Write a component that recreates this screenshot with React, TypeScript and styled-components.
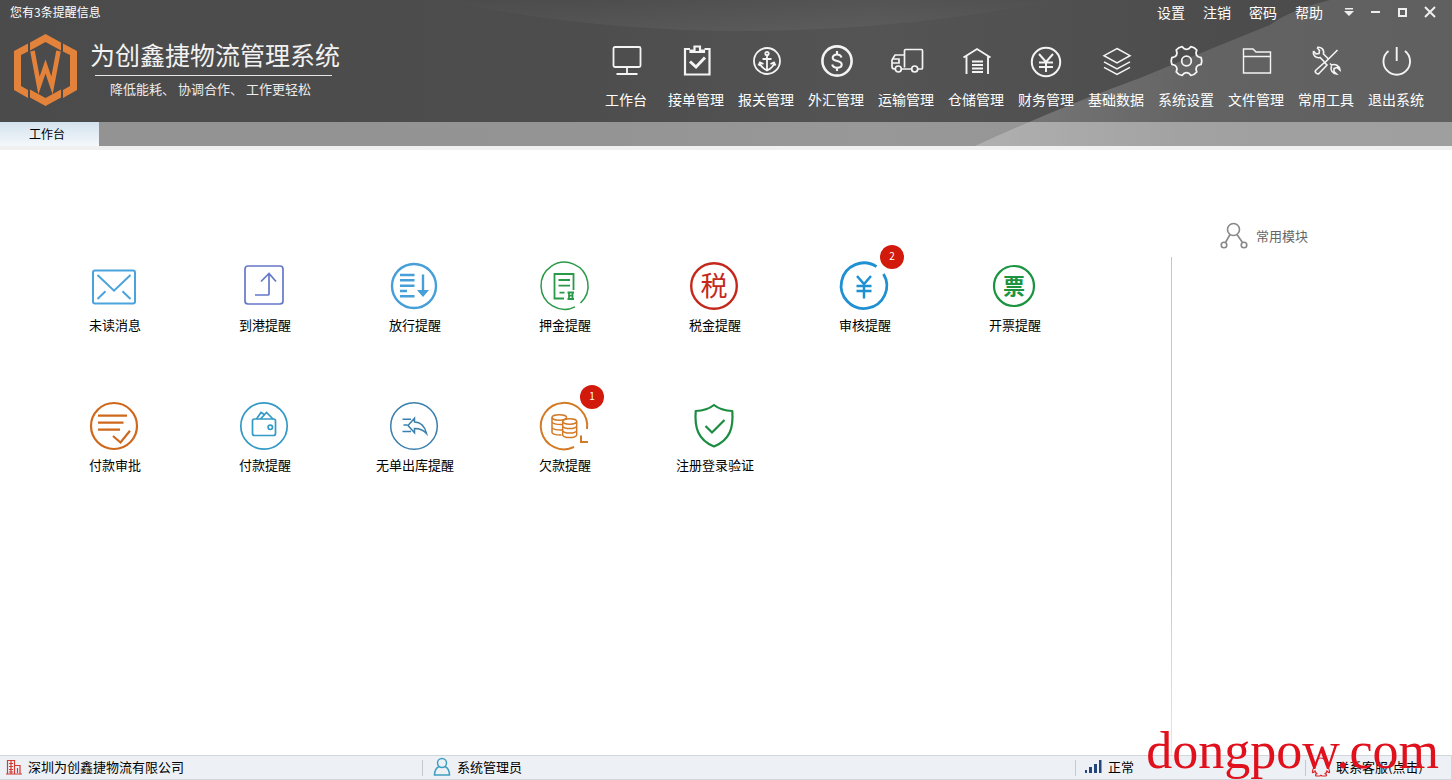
import React from "react";
import styled, { createGlobalStyle } from "styled-components";

const GlobalStyle = createGlobalStyle`
  * { box-sizing: border-box; }
  body {
    margin: 0;
    background: #fff;
    color: #000;
    font-family: "Noto Sans CJK SC", "Liberation Sans", sans-serif;
    font-size: 13px;
    line-height: 20px;
  }
  button {
    margin: 0;
    padding: 0;
    border: 0;
    background: none;
    color: inherit;
    font: inherit;
    cursor: pointer;
  }
  svg { display: block; flex: none; }
`;

const Page = styled.div`
  position: relative;
  display: flex;
  flex-direction: column;
  min-height: 100vh;
`;

const Header = styled.header`
  position: relative;
  isolation: isolate;
  background: linear-gradient(90deg, #4b4b4b, #4d4d4d 40%, #545454 60%, #4c4c4c 85%);
  color: #fff;
`;

const Backdrop = styled.svg`
  position: absolute;
  inset: 0;
  z-index: -1;
  width: 100%;
  height: 100%;
`;

const TitleBar = styled.div`
  display: flex;
  align-items: center;
  height: 24px;
  padding: 0 9px 0 10px;
`;

const Notice = styled.span`
  flex: 1;
  font-size: 12px;
`;

const Menu = styled.nav`
  display: flex;
  gap: 18px;
  margin-right: 12px;
  font-size: 14px;
`;

const WindowButton = styled.button`
  display: flex;
  align-items: center;
  justify-content: center;
  width: 27px;
  height: 24px;
`;

const Banner = styled.div`
  display: flex;
  justify-content: space-between;
  height: 98px;
  padding: 0 21px 0 12px;
`;

const Brand = styled.div`
  display: flex;
  gap: 12px;
  padding-top: 8px;
`;

const BrandText = styled.div`
  display: flex;
  flex-direction: column;
  align-items: flex-start;
`;

const SystemName = styled.h1`
  margin: 4px 0 3px;
  font-size: 25px;
  font-weight: 400;
  line-height: 36px;
  white-space: nowrap;
  color: #f2f2f2;
`;

const Slogan = styled.p`
  display: flex;
  gap: 3px;
  margin: 0 0 0 5px;
  padding: 3px 21px 0 15px;
  border-top: 1px solid #e6e6e6;
  color: #ececec;
  white-space: nowrap;
`;

const Toolbar = styled.nav`
  display: flex;
`;

const Tool = styled.button`
  display: flex;
  flex-direction: column;
  align-items: center;
  width: 70px;
  padding-top: 19px;
  gap: 10px;
  font-size: 14px;
  white-space: nowrap;
`;

const TabStrip = styled.div`
  display: flex;
  height: 24px;
  background: rgba(255, 255, 255, 0.4);
`;

const Tab = styled.button`
  width: 99px;
  padding-right: 5px;
  background: linear-gradient(#d3e2ee, #f4f8fb);
  color: #000;
  font-size: 12px;
`;

const Main = styled.main`
  display: flex;
  flex: 1;
  border-top: 4px solid #f0f0f0;
`;

const Tiles = styled.section`
  display: grid;
  flex: 1;
  grid-template-columns: repeat(auto-fill, 150px);
  grid-auto-rows: 140px;
  align-content: start;
  padding: 108px 0 0 40px;
`;

const Tile = styled.button`
  position: relative;
  display: flex;
  flex-direction: column;
  align-items: center;
  justify-content: flex-start;
  gap: 1px;
`;

const Badge = styled.span`
  position: absolute;
  top: -13px;
  left: 90px;
  width: 24px;
  height: 24px;
  border-radius: 50%;
  background: #d11a0c;
  color: #fff;
  font-size: 10px;
  line-height: 22px;
  text-align: center;
`;

const Side = styled.aside`
  display: flex;
  flex-direction: column;
  width: 281px;
`;

const SideTitle = styled.h2`
  display: flex;
  align-items: center;
  gap: 7px;
  margin: 0;
  padding: 71px 0 6px 48px;
  color: #666;
  font-size: 13px;
  font-weight: 400;
`;

const SideBody = styled.div`
  flex: 1;
  border-left: 1px solid;
  border-image: linear-gradient(#c6c6c6 60%, #e6e6e6) 1;
`;

const StatusBar = styled.footer`
  display: grid;
  grid-template-columns: 422px 1fr 230px 146px;
  height: 25px;
  border: 1px solid #d0d7db;
  border-left: 0;
  background: #edf1f6;
`;

const StatusItem = styled.div<{ $inset: number }>`
  display: flex;
  align-items: center;
  gap: 6px;
  padding: 0 0 2px ${(p) => p.$inset}px;
  white-space: nowrap;

  & + & {
    background: linear-gradient(#c3c9ce, #c3c9ce) left center / 1px 16px no-repeat;
  }
`;

const StatusLink = styled.a`
  display: flex;
  align-items: center;
  gap: 5px;
  color: #000;
  text-decoration: none;
`;

const Watermark = styled.div`
  position: absolute;
  right: 13px;
  bottom: 0;
  color: #e0101c;
  font-family: "Liberation Serif", serif;
  font-size: 52px;
  line-height: 58px;
  pointer-events: none;
`;

const ToolIcon = ({ width = 2, children }: { width?: number; children: React.ReactNode }) => (
  <svg width="36" height="36" viewBox="0 0 36 36" fill="none" stroke="#f4f4f4" strokeWidth={width} aria-hidden="true">
    {children}
  </svg>
);

const TileIcon = ({ color, width = 2, children }: { color: string; width?: number; children: React.ReactNode }) => (
  <svg width="56" height="56" viewBox="1 0 56 56" fill="none" stroke={color} strokeWidth={width} aria-hidden="true">
    {children}
  </svg>
);

const gearOutline = () => {
  const at = (r: number, deg: number) => {
    const a = (deg * Math.PI) / 180;
    return `${(18.5 + r * Math.cos(a)).toFixed(2)} ${(18 + r * Math.sin(a)).toFixed(2)}`;
  };
  let d = "";
  for (let k = 0; k < 6; k++) {
    const c = k * 60;
    d += `${k ? "L" : "M"}${at(12.4, c - 20)}L${at(15, c - 13)}Q${at(16, c)} ${at(15, c + 13)}L${at(12.4, c + 20)}Q${at(11, c + 30)} ${at(12.4, c + 40)}`;
  }
  return d + "Z";
};

const tools: { label: string; icon: React.ReactNode }[] = [
  {
    label: "工作台",
    icon: (
      <ToolIcon width={1.8}>
        <rect x="5.5" y="4" width="27" height="20" rx="1.5" />
        <path d="M19 24v7M8.500 31h21" />
      </ToolIcon>
    ),
  },
  {
    label: "接单管理",
    icon: (
      <ToolIcon width={2.2}>
        <path d="M12 6H7v25.500h24.500V6h-5" />
        <path d="M11.500 9h15M12.500 10V7.500h4V3.500h5.500v4h4V10" />
        <path d="M12 18.500l6 5.500 9-9.500" strokeWidth="3" />
      </ToolIcon>
    ),
  },
  {
    label: "报关管理",
    icon: (
      <ToolIcon width={1.8}>
        <circle cx="19" cy="18" r="13" />
        <circle cx="19" cy="10.500" r="1.700" />
        <path d="M19 12v15.500M14.500 16h9M12 20.500c1 4 4 5.500 7 7 3-1.500 6-3 7-7M10.500 22.500l1.500-3 3.500 1.500M27.500 22.500l-1.500-3-3.500 1.500" />
      </ToolIcon>
    ),
  },
  {
    label: "外汇管理",
    icon: (
      <ToolIcon width={2.6}>
        <circle cx="19" cy="18" r="14.600" />
        <path d="M23.500 14.500c-.5-2-2.300-3-4.500-3-2.500 0-4.300 1.300-4.300 3.200 0 4.600 9 2 9 6.700 0 2-2 3.300-4.700 3.300-2.500 0-4.300-1.200-4.800-3.200M19 8v3.500M19 24.500V28" strokeWidth="2.100" />
      </ToolIcon>
    ),
  },
  {
    label: "运输管理",
    icon: (
      <ToolIcon width={1.7}>
        <path d="M16.500 24.500V7.500q0-1 1-1h16q1 0 1 1v17.500q0 1-1 1H30M23.500 26h-10M7 26q-3 0-3-2v-7l3-5h9.500M5.500 16h5.500v4H4.500" />
        <circle cx="10.300" cy="26" r="3" />
        <circle cx="26.700" cy="26" r="3" />
      </ToolIcon>
    ),
  },
  {
    label: "仓储管理",
    icon: (
      <ToolIcon width={1.9}>
        <path d="M5.500 14.500L19 6l13.500 8.500M8.500 13v18M30 13v18M14 18.500h11M14 22h11M14 25.500h11M14 29h11" />
      </ToolIcon>
    ),
  },
  {
    label: "财务管理",
    icon: (
      <ToolIcon>
        <circle cx="18" cy="19" r="14.200" />
        <path d="M11 11l7 8 7-8M18 19v10M11 19.500h14M11 24h14" />
      </ToolIcon>
    ),
  },
  {
    label: "基础数据",
    icon: (
      <ToolIcon width={1.5}>
        <path d="M19 5.500l13 7.200-13 7.200-13-7.200zM6 18.800L19 26l13-7.200M6 24.300l13 7.200 13-7.200" />
      </ToolIcon>
    ),
  },
  {
    label: "系统设置",
    icon: (
      <ToolIcon width={1.8}>
        <path d={gearOutline()} strokeLinejoin="round" />
        <circle cx="18.500" cy="18" r="4.800" />
      </ToolIcon>
    ),
  },
  {
    label: "文件管理",
    icon: (
      <ToolIcon width={1.4}>
        <path d="M5.500 6h9.500l3 3h14.500v21h-27zM5.500 13.500h27" />
      </ToolIcon>
    ),
  },
  {
    label: "常用工具",
    icon: (
      <ToolIcon width={1.6}>
        <path d="M9 4.500c4-1 7.500 2 6.500 6.500l5 5M5.500 8c-1 4 2 7.500 6.500 6.500l4.500 4.500M9 4.500l2.500 3-.5 3-3 .5L5.500 8" />
        <path d="M22 20.500l1.500 1.500c3.500-1.500 8 .5 8.500 5l-3-2.500-3 1v3l2.500 2.500c-4-.5-6.500-4-5-8" />
        <path d="M29.500 7L17 19.500M16.500 19.500l2.500 2.500-8 8.500q-1.500 1-3-.5t0-3z" />
      </ToolIcon>
    ),
  },
  {
    label: "退出系统",
    icon: (
      <ToolIcon width={1.9}>
        <path d="M10.500 8a13.300 13.300 0 1 0 16.500 0M18.700 4v14" />
      </ToolIcon>
    ),
  },
];

const tiles: { label: string; count?: number; icon: React.ReactNode }[] = [
  {
    label: "未读消息",
    icon: (
      <TileIcon color="#4ba3dc">
        <rect x="7" y="12.500" width="42" height="33" rx="2" />
        <path d="M11.500 17L28 32.700 44.500 17M11.500 41l8-7.700M44.500 41l-8-7.700" />
      </TileIcon>
    ),
  },
  {
    label: "到港提醒",
    icon: (
      <TileIcon color="#6478c8" width={1.7}>
        <rect x="9" y="8" width="38" height="38" rx="3" />
        <path d="M19 37h13q1 0 1-1V15.500M25 23.500l8-8 7 8" />
      </TileIcon>
    ),
  },
  {
    label: "放行提醒",
    icon: (
      <TileIcon color="#469fd8" width={2.4}>
        <circle cx="28" cy="28" r="22" />
        <path d="M14 17h14.500M14 22.300h14.500M14 27.700h14.500M14 33h7M14 38.300h14.500" />
        <path d="M37 16.500V34" />
        <path d="M31 32h12l-6 7z" fill="#469fd8" stroke="none" />
      </TileIcon>
    ),
  },
  {
    label: "押金提醒",
    icon: (
      <TileIcon color="#2a9a48" width={1.5}>
        <path d="M44.500 45A23.500 23.500 0 1 0 39 48.800" />
        <path d="M37.500 32V16h-19v24.500H28M22.500 22h11.500M22.500 27.700h11.500M23.500 34.700h5M31.500 34.500h6.500M31.500 41h6.500M33 34.500v6.500M36.500 34.500v6.500M33 37.700h3.500" strokeWidth="1.800" />
      </TileIcon>
    ),
  },
  {
    label: "税金提醒",
    icon: (
      <TileIcon color="#c4281c" width={2.4}>
        <circle cx="28" cy="28" r="22.800" />
        <text x="28" y="38" fontSize="27" textAnchor="middle" fill="#c4281c" stroke="none">税</text>
      </TileIcon>
    ),
  },
  {
    label: "审核提醒",
    count: 2,
    icon: (
      <TileIcon color="#1f90d2" width={2.8}>
        <path d="M40.500 8.700A22.800 22.800 0 1 0 47.500 16" />
        <path d="M21 18l7 8 7-8M28 26v14.500M20.500 28h15M20.500 33h15" strokeWidth="2.500" />
      </TileIcon>
    ),
  },
  {
    label: "开票提醒",
    icon: (
      <TileIcon color="#1a9440" width={2.2}>
        <circle cx="28" cy="28" r="20" />
        <text x="28" y="36" fontSize="22" fontWeight="700" textAnchor="middle" fill="#1a9440" stroke="none">票</text>
      </TileIcon>
    ),
  },
  {
    label: "付款审批",
    icon: (
      <TileIcon color="#d0681c" width={2.2}>
        <circle cx="28" cy="28" r="23" />
        <path d="M12 17.700h29M12 24.700h25.500M12 31.700h22M27 38l7.500 6.500L44 32.700" />
      </TileIcon>
    ),
  },
  {
    label: "付款提醒",
    icon: (
      <TileIcon color="#3399c6" width={1.7}>
        <circle cx="28" cy="28" r="23.200" />
        <rect x="16.500" y="21" width="23" height="16.500" rx="2" />
        <circle cx="34.300" cy="29.300" r="2.200" />
        <path d="M20.500 21l4.500-6.500 3 1.800M24.500 21l6-6.500L37 21" />
      </TileIcon>
    ),
  },
  {
    label: "无单出库提醒",
    icon: (
      <TileIcon color="#3a7fae" width={1.5}>
        <circle cx="28" cy="28" r="23.300" />
        <path d="M16.500 21.300H25M17.500 27h4M16.500 33.500H25M22 27.500l6.500-7.200V24c6 0 10.500 4.500 12 11.500-3.500-4-7-5-12-5v4.300z" />
      </TileIcon>
    ),
  },
  {
    label: "欠款提醒",
    count: 1,
    icon: (
      <TileIcon color="#d27a26" width={2}>
        <path d="M38 49A23.200 23.200 0 1 1 51 31M45 37.500V44h7" />
        <g strokeWidth="1.500">
          <ellipse cx="23.300" cy="19.500" rx="7.300" ry="2.700" />
          <ellipse cx="33.700" cy="23.500" rx="7" ry="2.700" />
          <path d="M16 19.500v15c0 1.500 4 2.700 9.500 2.500M16 24c1 1.800 5 2.700 10.500 2.500M16 29.500c1 1.800 5 2.700 10.500 2.500M26.700 23.500v13.500c1 3.400 13 3.400 14 0V23.500M26.700 28c1 3.400 13 3.400 14 0M26.700 32.500c1 3.400 13 3.400 14 0" />
        </g>
      </TileIcon>
    ),
  },
  {
    label: "注册登录验证",
    icon: (
      <TileIcon color="#1c8c40" width={2.2}>
        <path d="M28 7c-5 4-11 5.700-18.300 6-1.200 16 1.800 29 18.300 35.500C44.500 42 47.500 29 46.300 13 39 12.700 33 11 28 7z" strokeLinejoin="round" />
        <path d="M19.500 28l6.500 6.500 12.500-12.500" />
      </TileIcon>
    ),
  },
];

const Logo = () => (
  <svg width="66" height="76" viewBox="12 32 66 76" fill="#e3823a" role="img" aria-label="为创鑫捷">
    <path d="M45.500 34L61 42.500v8L45.500 42 30 50.500v-8z" />
    <path d="M28 43.500v8L21 55v31l7 4v8l-14-8V51z" />
    <path d="M63 43.500v8l7 3.500v31l-7 4v8l14-8V51z" />
    <path d="M45.500 106L61 97.500v-8L45.500 98 30 89.500v8z" />
    <path d="M32.500 51l6.500 34.500 6.500-19 6.500 19L58.500 51" fill="none" stroke="#e3823a" strokeWidth="4.600" />
  </svg>
);

export default function App() {
  return (
    <Page>
      <GlobalStyle />
      <Header>
        <Backdrop viewBox="0 0 1452 146" preserveAspectRatio="xMaxYMin slice" aria-hidden="true">
          <defs>
            <linearGradient id="beam" x1="0" x2="1">
              <stop offset="0" stopColor="#fff" stopOpacity="0.24" />
              <stop offset="0.45" stopColor="#fff" stopOpacity="0.13" />
              <stop offset="1" stopColor="#fff" stopOpacity="0.11" />
            </linearGradient>
            <linearGradient id="glow" x1="0" x2="0" y1="0" y2="1">
              <stop offset="0" stopColor="#fff" stopOpacity="0" />
              <stop offset="1" stopColor="#fff" stopOpacity="0.05" />
            </linearGradient>
          </defs>
          <path d="M440 0Q740 62 1060 0z" fill="url(#glow)" />
          <path d="M975 146Q1060 107 1140 78 1220 45 1270 25 1290 10 1330 0H1452V146z" fill="url(#beam)" />
        </Backdrop>
        <TitleBar>
          <Notice>您有3条提醒信息</Notice>
          <Menu>
            {["设置", "注销", "密码", "帮助"].map((item) => (
              <button key={item}>{item}</button>
            ))}
          </Menu>
          <WindowButton aria-label="展开">
            <svg width="10" height="8" viewBox="0 0 10 8" fill="#eee"><path d="M1 0h8v1.500H1zM0 3h10L5 8z" /></svg>
          </WindowButton>
          <WindowButton aria-label="最小化">
            <svg width="9" height="2" viewBox="0 0 9 2" fill="#eee"><path d="M0 0h9v2H0z" /></svg>
          </WindowButton>
          <WindowButton aria-label="最大化">
            <svg width="9" height="9" viewBox="0 0 9 9" fill="none" stroke="#eee" strokeWidth="2"><path d="M1 1h7v7H1z" /></svg>
          </WindowButton>
          <WindowButton aria-label="关闭">
            <svg width="12" height="12" viewBox="0 0 12 12" fill="none" stroke="#eee" strokeWidth="2"><path d="M1 1l10 10M11 1L1 11" /></svg>
          </WindowButton>
        </TitleBar>
        <Banner>
          <Brand>
            <Logo />
            <BrandText>
              <SystemName>为创鑫捷物流管理系统</SystemName>
              <Slogan>
                <span>降低能耗、</span>
                <span>协调合作、</span>
                <span>工作更轻松</span>
              </Slogan>
            </BrandText>
          </Brand>
          <Toolbar>
            {tools.map((tool) => (
              <Tool key={tool.label}>
                {tool.icon}
                {tool.label}
              </Tool>
            ))}
          </Toolbar>
        </Banner>
        <TabStrip role="tablist">
          <Tab role="tab" aria-selected="true">工作台</Tab>
        </TabStrip>
      </Header>
      <Main>
        <Tiles>
          {tiles.map((tile) => (
            <Tile key={tile.label}>
              {tile.icon}
              <span>{tile.label}</span>
              {tile.count && <Badge>{tile.count}</Badge>}
            </Tile>
          ))}
        </Tiles>
        <Side>
          <SideTitle>
            <svg width="30" height="30" viewBox="0 0 30 30" fill="none" stroke="#888" strokeWidth="1.600" aria-hidden="true">
              <circle cx="14.500" cy="8.500" r="6" />
              <circle cx="5" cy="24" r="2.800" />
              <circle cx="25" cy="24" r="2.800" />
              <path d="M11 13.500L6.500 21.500M18 13.500l5.500 8" />
            </svg>
            常用模块
          </SideTitle>
          <SideBody />
        </Side>
      </Main>
      <StatusBar>
        <StatusItem $inset={6}>
          <svg width="16" height="16" viewBox="0 0 16 16" fill="none" stroke="#d23a34" strokeWidth="1.200" aria-hidden="true">
            <path d="M1.500 15V1.500h7V15M8.500 6.500H14V15M0 15h16M3 4.500h4M3 7.500h4M3 10.500h4M3 13h4M5 2v13M11.500 9v5" />
          </svg>
          深圳为创鑫捷物流有限公司
        </StatusItem>
        <StatusItem $inset={11}>
          <svg width="18" height="20" viewBox="0 0 18 20" fill="none" stroke="#3f9fc0" strokeWidth="1.500" aria-hidden="true">
            <circle cx="9" cy="6" r="4.500" />
            <path d="M6 9.500c-3 1.500-4.500 4-4.500 8.500h15c0-4.500-1.500-7-4.500-8.500" />
          </svg>
          系统管理员
        </StatusItem>
        <StatusItem $inset={10}>
          <svg width="17" height="14" viewBox="0 0 17 14" fill="#23467c" aria-hidden="true">
            <path d="M0 10h2v3H0zM4 7h3v6H4zM9 4h3v9H9zM14 0h2.500v13H14z" />
          </svg>
          正常
        </StatusItem>
        <StatusItem $inset={6}>
          <StatusLink href="#service">
            <svg width="20" height="20" viewBox="0 0 20 20" fill="none" stroke="#d8262c" strokeWidth="1.200" aria-hidden="true">
              <path d="M10 1C6.500 1 5 3.500 5 7.500 3 10 1 13 1.500 15.500c.8.500 1.500-.5 2.500-1.500.3 1.200 1 2 1.800 2.700C4.500 17 4 19 5.500 19H9l1-.7 1 .7h3.500c1.500 0 1-2-.3-2.300.8-.7 1.500-1.500 1.800-2.700 1 1 1.700 2 2.500 1.500C19 13 17 10 15 7.500 15 3.500 13.500 1 10 1z" />
            </svg>
            联系客服(点击)
          </StatusLink>
        </StatusItem>
      </StatusBar>
      <Watermark>dongpow.com</Watermark>
    </Page>
  );
}
